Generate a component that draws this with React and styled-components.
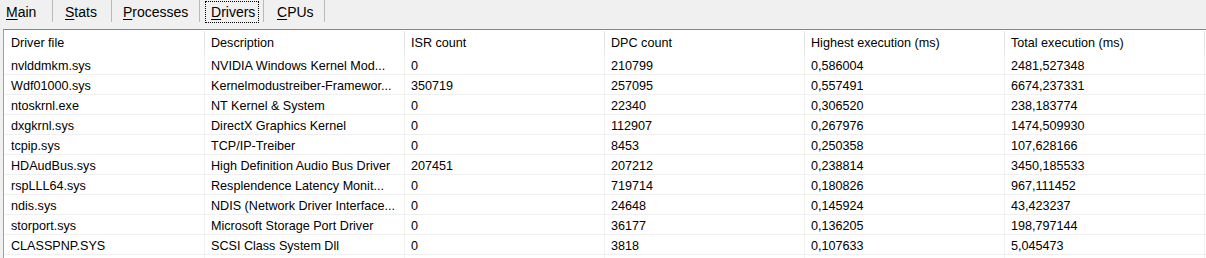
import styled, { createGlobalStyle } from "styled-components";

const GlobalStyle = createGlobalStyle`
  html, body {
    margin: 0;
    padding: 0;
    background: #f0f0f0;
    overflow: hidden;
  }
  * {
    box-sizing: border-box;
  }
`;

const tabs = [
  { label: "Main", key: "M", width: 53, pad: 6 },
  { label: "Stats", key: "S", width: 59, pad: 12 },
  { label: "Processes", key: "P", width: 88, pad: 11 },
  { label: "Drivers", key: "D", width: 64, pad: 6, active: true },
  { label: "CPUs", key: "C", width: 61, pad: 13 },
];

const columns = [
  "Driver file",
  "Description",
  "ISR count",
  "DPC count",
  "Highest execution (ms)",
  "Total execution (ms)",
];

const rows = [
  ["nvlddmkm.sys", "NVIDIA Windows Kernel Mod...", "0", "210799", "0,586004", "2481,527348"],
  ["Wdf01000.sys", "Kernelmodustreiber-Framewor...", "350719", "257095", "0,557491", "6674,237331"],
  ["ntoskrnl.exe", "NT Kernel & System", "0", "22340", "0,306520", "238,183774"],
  ["dxgkrnl.sys", "DirectX Graphics Kernel", "0", "112907", "0,267976", "1474,509930"],
  ["tcpip.sys", "TCP/IP-Treiber", "0", "8453", "0,250358", "107,628166"],
  ["HDAudBus.sys", "High Definition Audio Bus Driver", "207451", "207212", "0,238814", "3450,185533"],
  ["rspLLL64.sys", "Resplendence Latency Monit...", "0", "719714", "0,180826", "967,111452"],
  ["ndis.sys", "NDIS (Network Driver Interface...", "0", "24648", "0,145924", "43,423237"],
  ["storport.sys", "Microsoft Storage Port Driver", "0", "36177", "0,136205", "198,797144"],
  ["CLASSPNP.SYS", "SCSI Class System Dll", "0", "3818", "0,107633", "5,045473"],
];

export default function App() {
  return (
    <Window>
      <GlobalStyle />
      <TabStrip>
        {tabs.map((t) => (
          <Tab key={t.label} $width={t.width} $pad={t.pad}>
            <TabLabel $active={t.active}>
              <u>{t.key}</u>
              {t.label.slice(1)}
            </TabLabel>
          </Tab>
        ))}
      </TabStrip>
      <Frame>
        <ListView>
          <HeaderRow>
            {columns.map((c) => (
              <HeaderCell key={c}>{c}</HeaderCell>
            ))}
          </HeaderRow>
          {rows.map((r) => (
            <Row key={r[0]}>
              {r.map((v, i) => (
                <Cell key={i}>{v}</Cell>
              ))}
            </Row>
          ))}
          <FillerRow>
            {columns.map((c) => (
              <FillerCell key={c} />
            ))}
          </FillerRow>
        </ListView>
      </Frame>
    </Window>
  );
}

const Window = styled.div`
  display: flex;
  flex-direction: column;
  width: 1206px;
  height: 258px;
  background: #f0f0f0;
  font-family: "Liberation Sans", Arial, sans-serif;
  color: #000;
`;

const TabStrip = styled.div`
  display: flex;
  height: 29px;
`;

const Tab = styled.div`
  display: flex;
  align-items: flex-start;
  width: ${(p) => p.$width}px;
  height: 22px;
  padding-left: ${(p) => p.$pad}px;
  border-right: 1px solid #b9b9b9;
  font-size: 14px;
`;

const TabLabel = styled.span`
  display: inline-block;
  margin-top: 2px;
  padding: ${(p) => (p.$active ? "2px 3px 2px 5px" : "2px 0 2px")};
  line-height: 16px;
  outline: ${(p) => (p.$active ? "1px dotted #000" : "none")};
  u {
    text-decoration-thickness: 1px;
    text-underline-offset: 2px;
  }
`;

const Frame = styled.div`
  flex: 1;
  display: flex;
  margin-left: 3px;
  border-top: 1px solid #85858f;
  border-left: 1px solid #a0a0a0;
  background: #fff;
  overflow: hidden;
`;

const ListView = styled.div`
  display: flex;
  flex-direction: column;
  flex: 1;
  font-size: 12.6px;
`;

const gridCols = `201px repeat(5, 200px) 1fr`;

const HeaderRow = styled.div`
  display: grid;
  grid-template-columns: ${gridCols};
  height: 25px;
  padding-top: 1px;
`;

const HeaderCell = styled.div`
  display: flex;
  align-items: center;
  padding-left: 6px;
  border-right: 1px solid #e5e5e5;
  white-space: nowrap;
  &:first-child {
    padding-left: 7px;
  }
`;

const Row = styled.div`
  display: grid;
  grid-template-columns: ${gridCols};
  height: 20px;
  border-bottom: 1px solid #f0f0f0;
`;

const Cell = styled.div`
  display: flex;
  align-items: center;
  padding-left: 6px;
  padding-top: 2px;
  border-right: 1px solid #f0f0f0;
  white-space: nowrap;
  overflow: hidden;
  &:first-child {
    padding-left: 7px;
  }
`;

const FillerRow = styled.div`
  display: grid;
  grid-template-columns: ${gridCols};
  flex: 1;
`;

const FillerCell = styled.div`
  border-right: 1px solid #f0f0f0;
`;
